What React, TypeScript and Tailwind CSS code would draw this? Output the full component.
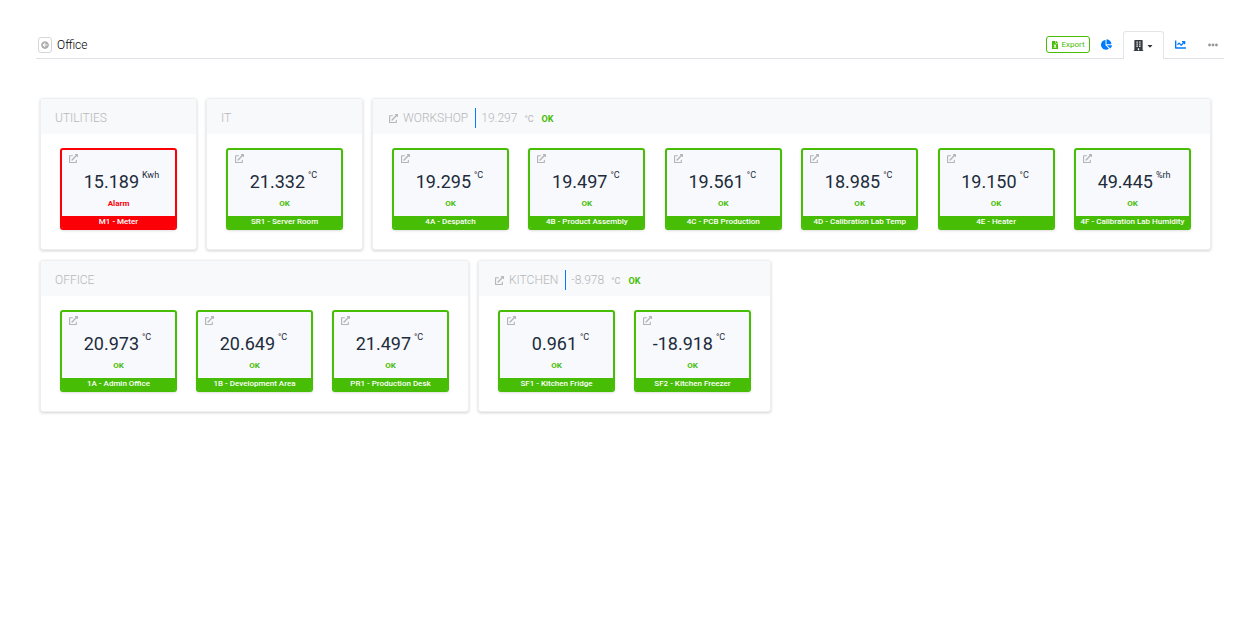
import { FaArrowCircleLeft, FaBuilding, FaCaretDown, FaChartLine, FaChartPie, FaEllipsisH, FaExternalLinkAlt, FaFileExcel } from "react-icons/fa";
import clsx from "clsx";

interface Sensor {
  name: string;
  value: string;
  unit: string;
  alarm?: boolean;
}

interface Area {
  name: string;
  average?: string;
  grow?: boolean;
  sensors: Sensor[];
}

const areas: Area[] = [
  { name: "Utilities", sensors: [{ name: "M1 - Meter", value: "15.189", unit: "Kwh", alarm: true }] },
  { name: "IT", sensors: [{ name: "SR1 - Server Room", value: "21.332", unit: "°C" }] },
  {
    name: "Workshop",
    average: "19.297",
    grow: true,
    sensors: [
      { name: "4A - Despatch", value: "19.295", unit: "°C" },
      { name: "4B - Product Assembly", value: "19.497", unit: "°C" },
      { name: "4C - PCB Production", value: "19.561", unit: "°C" },
      { name: "4D - Calibration Lab Temp", value: "18.985", unit: "°C" },
      { name: "4E - Heater", value: "19.150", unit: "°C" },
      { name: "4F - Calibration Lab Humidity", value: "49.445", unit: "%rh" },
    ],
  },
  {
    name: "Office",
    sensors: [
      { name: "1A - Admin Office", value: "20.973", unit: "°C" },
      { name: "1B - Development Area", value: "20.649", unit: "°C" },
      { name: "PR1 - Production Desk", value: "21.497", unit: "°C" },
    ],
  },
  {
    name: "Kitchen",
    average: "-8.978",
    sensors: [
      { name: "SF1 - Kitchen Fridge", value: "0.961", unit: "°C" },
      { name: "SF2 - Kitchen Freezer", value: "-18.918", unit: "°C" },
    ],
  },
];

const SensorCard = ({ name, value, unit, alarm }: Sensor) => (
  <article
    className={clsx(
      "flex h-[82px] w-[117px] shrink-0 flex-col overflow-hidden rounded-[3px] border-2 bg-[#f8f9fc] shadow-sm",
      alarm ? "border-[#fb0007]" : "border-[#47bd05]",
    )}
  >
    <a href="#" aria-label={`Open ${name}`} className="ml-[7px] mt-1 self-start text-[#b4b4b4]">
      <FaExternalLinkAlt size={9} />
    </a>
    <div className="flex items-start gap-[3px] pt-2 text-[#212b3b]">
      <span className="w-[77px] pt-px text-right text-[18px] leading-5">{value}</span>
      <span className="text-[9px] leading-[9px]">{unit}</span>
    </div>
    <div className={clsx("mt-1.5 text-center text-[8px] font-bold leading-3", alarm ? "text-[#fb0007]" : "text-[#47bd05]")}>
      {alarm ? "Alarm" : "OK"}
    </div>
    <h3
      className={clsx(
        "mt-auto whitespace-nowrap text-center text-[8px] font-medium leading-3 text-white",
        alarm ? "bg-[#fb0007]" : "bg-[#47bd05]",
      )}
    >
      {name}
    </h3>
  </article>
);

const AreaPanel = ({ name, average, grow, sensors }: Area) => (
  <section className={clsx("rounded-[3px] border border-[#eeeff1] bg-white shadow-[0_1px_3px_rgba(0,0,0,0.18)]", grow && "grow")}>
    <header className="flex h-[35px] items-center bg-[#f8f9fa] px-[14px] pt-[3px] text-[12px] font-light text-[#b5b7ba]">
      {average && (
        <a href="#" aria-label={`Open ${name}`} className="ml-0.5 mr-[5px]">
          <FaExternalLinkAlt size={9} />
        </a>
      )}
      <h2 className="uppercase">{name}</h2>
      {average && (
        <>
          <span className="ml-[7px] h-5 w-px bg-[#007bff]" />
          <div className="ml-[5px] flex items-baseline">
            <span>{average}</span>
            <span className="ml-[7px] text-[9px] font-normal">°C</span>
            <span className="ml-2 text-[9px] font-bold text-[#47bd05]">OK</span>
          </div>
        </>
      )}
    </header>
    <div className="flex justify-between gap-[19px] px-[19px] pb-[19px] pt-[14px]">
      {sensors.map((sensor) => (
        <SensorCard key={sensor.name} {...sensor} />
      ))}
    </div>
  </section>
);

const App = () => (
  <div className="min-h-screen bg-white pt-[31px] font-['Roboto',sans-serif] text-[#212b3b]">
    <header className="ml-9 mr-[31px] flex h-7 items-center border-b border-[#dee2e6]">
      <button
        type="button"
        aria-label="Back"
        className="ml-0.5 mr-[5px] flex h-4 w-[14px] items-center justify-center rounded-[3px] border border-[#d5d5d5] text-[#aaa]"
      >
        <FaArrowCircleLeft size={8} />
      </button>
      <h1 className="text-[12px] font-light text-black">Office</h1>
      <nav className="ml-auto flex items-center self-stretch">
        <button
          type="button"
          className="flex h-[17px] w-11 items-center justify-center gap-0.5 rounded-[3px] border border-[#47bd05] text-[8px] text-[#47bd05]"
        >
          <FaFileExcel size={8} />
          Export
        </button>
        <a href="#" aria-label="Charts" className="flex w-[33px] justify-center text-[#007bff]">
          <FaChartPie size={11} />
        </a>
        <a
          href="#"
          aria-label="Areas"
          className="-mb-px flex w-[41px] items-center justify-center gap-0.5 self-stretch rounded-t-[3px] border border-b-0 border-[#e3e6e9] bg-white text-[#343a40]"
        >
          <FaBuilding size={11} />
          <FaCaretDown size={8} />
        </a>
        <a href="#" aria-label="Trends" className="flex w-[33px] justify-center text-[#007bff]">
          <FaChartLine size={11} />
        </a>
        <button type="button" aria-label="More" className="ml-[5px] flex w-[22px] justify-center text-[#999]">
          <FaEllipsisH size={10} />
        </button>
      </nav>
    </header>
    <main className="flex flex-wrap gap-x-[9px] gap-y-[10px] pb-8 pl-10 pr-11 pt-[39px]">
      {areas.map((area) => (
        <AreaPanel key={area.name} {...area} />
      ))}
    </main>
  </div>
);

export default App;
